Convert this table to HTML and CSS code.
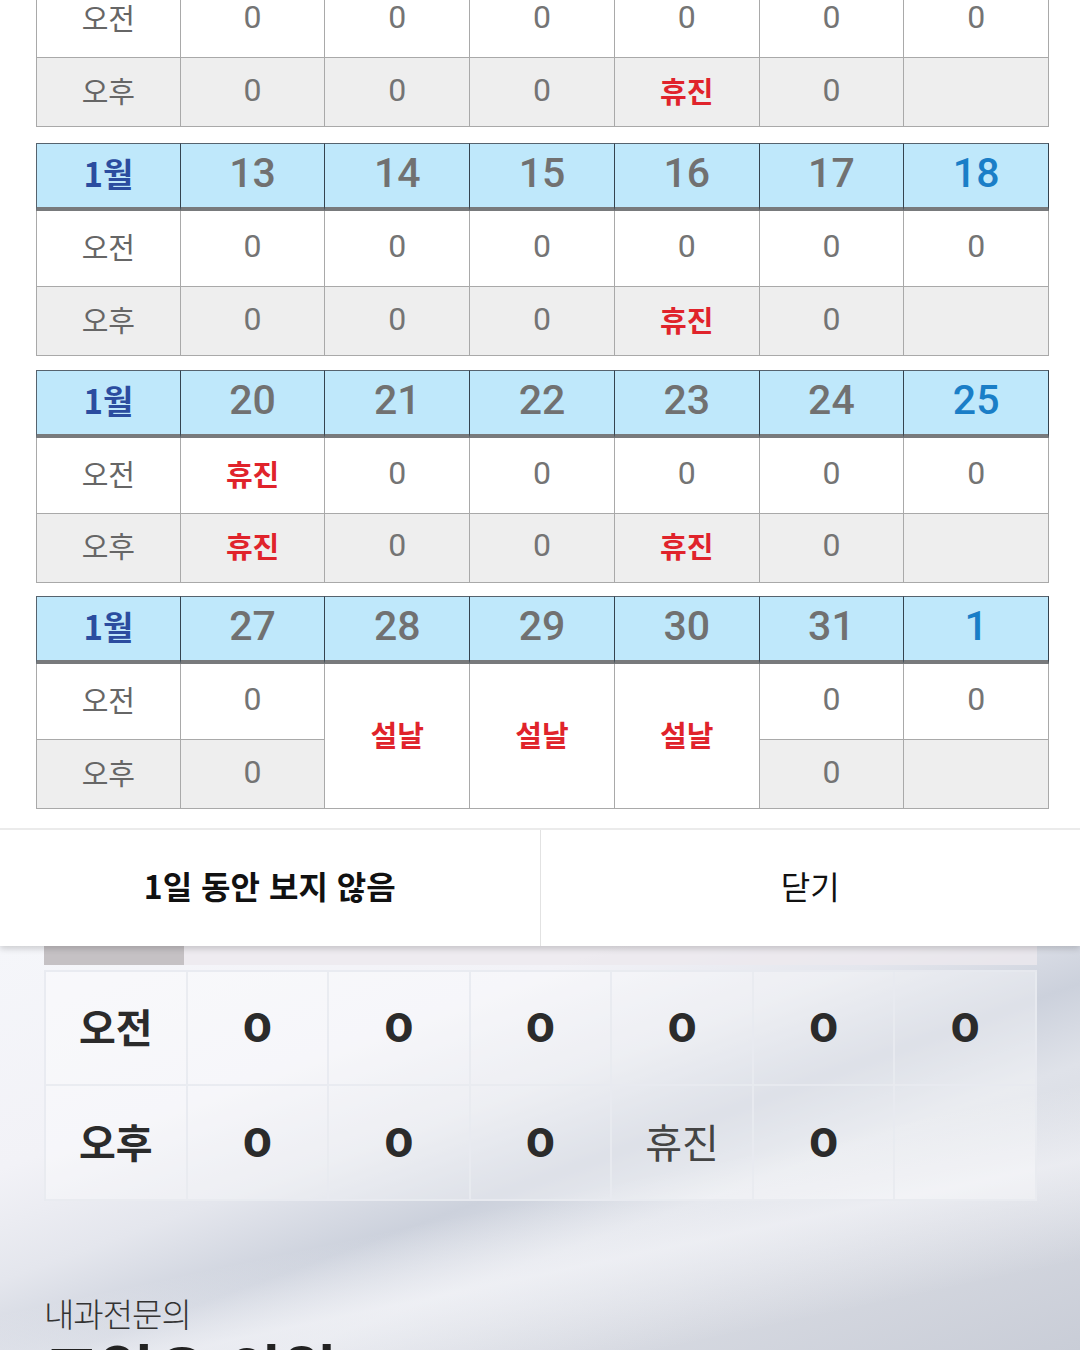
FILE: index.html
```html
<!DOCTYPE html>
<html lang="ko">
<head>
<meta charset="utf-8">
<title>진료시간 안내</title>
<link rel="stylesheet" href="styles.css">
</head>
<body>
<div class="popup">
  <div class="weeks">
    <div class="week week-first">
      <div class="hc hc-first month">1월</div>
      <div class="hc">6</div><div class="hc">7</div><div class="hc">8</div><div class="hc">9</div><div class="hc">10</div><div class="hc sat">11</div>
      <div class="c am lab">오전</div>
      <div class="c am">0</div><div class="c am">0</div><div class="c am">0</div><div class="c am">0</div><div class="c am">0</div><div class="c am">0</div>
      <div class="c pm lab">오후</div>
      <div class="c pm">0</div><div class="c pm">0</div><div class="c pm">0</div><div class="c pm off">휴진</div><div class="c pm">0</div><div class="c pm"></div>
    </div>
    <div class="week week-second">
      <div class="hc hc-first month">1월</div>
      <div class="hc">13</div><div class="hc">14</div><div class="hc">15</div><div class="hc">16</div><div class="hc">17</div><div class="hc sat">18</div>
      <div class="c am lab">오전</div>
      <div class="c am">0</div><div class="c am">0</div><div class="c am">0</div><div class="c am">0</div><div class="c am">0</div><div class="c am">0</div>
      <div class="c pm lab">오후</div>
      <div class="c pm">0</div><div class="c pm">0</div><div class="c pm">0</div><div class="c pm off">휴진</div><div class="c pm">0</div><div class="c pm"></div>
    </div>
    <div class="week">
      <div class="hc hc-first month">1월</div>
      <div class="hc">20</div><div class="hc">21</div><div class="hc">22</div><div class="hc">23</div><div class="hc">24</div><div class="hc sat">25</div>
      <div class="c am lab">오전</div>
      <div class="c am off">휴진</div><div class="c am">0</div><div class="c am">0</div><div class="c am">0</div><div class="c am">0</div><div class="c am">0</div>
      <div class="c pm lab">오후</div>
      <div class="c pm off">휴진</div><div class="c pm">0</div><div class="c pm">0</div><div class="c pm off">휴진</div><div class="c pm">0</div><div class="c pm"></div>
    </div>
    <div class="week">
      <div class="hc hc-first month">1월</div>
      <div class="hc">27</div><div class="hc">28</div><div class="hc">29</div><div class="hc">30</div><div class="hc">31</div><div class="hc sat">1</div>
      <div class="c am lab">오전</div>
      <div class="c am">0</div>
      <div class="c am off span2">설날</div><div class="c am off span2">설날</div><div class="c am off span2">설날</div>
      <div class="c am">0</div><div class="c am">0</div>
      <div class="c pm lab">오후</div>
      <div class="c pm">0</div>
      <div class="c pm">0</div><div class="c pm"></div>
    </div>
  </div>
  <div class="actions">
    <button class="act act-bold" type="button">1일 동안 보지 않음</button>
    <button class="act" type="button">닫기</button>
  </div>
</div>

<section class="page">
  <div class="sched">
    <div class="sched-top"><span class="sched-tab"></span></div>
    <div class="sched-grid">
      <div class="sc sc-lab">오전</div>
      <div class="sc mark">O</div><div class="sc mark">O</div><div class="sc mark">O</div><div class="sc mark">O</div><div class="sc mark">O</div><div class="sc mark">O</div>
      <div class="sc sc-lab">오후</div>
      <div class="sc mark">O</div><div class="sc mark">O</div><div class="sc mark">O</div><div class="sc sc-off">휴진</div><div class="sc mark">O</div><div class="sc"></div>
    </div>
  </div>
  <div class="intro">
    <p class="intro-sub">내과전문의</p>
    <h1 class="intro-title">고일오 의원</h1>
  </div>
</section>
</body>
</html>
```

FILE: styles.css
```css
* { box-sizing: border-box; }

html, body {
  margin: 0;
  padding: 0;
}

body {
  width: 1080px;
  height: 1350px;
  overflow: hidden;
  font-family: Roboto, "Noto Sans CJK KR", sans-serif;
  background: #e9ebf1;
}

/* ---------- popup ---------- */
.popup {
  position: relative;
  z-index: 2;
  background: #ffffff;
  box-shadow: 0 3px 6px rgba(0, 0, 0, 0.16);
}

.weeks {
  padding: 0 0 19px 36px;
}

.week {
  display: grid;
  width: 1013px;
  grid-template-columns: repeat(7, 1fr);
  grid-template-rows: 68px 76px 69px;
  margin-top: 13.5px;
}

.week-first { margin-top: -86px; }
.week-second { margin-top: 16px; }

.hc {
  display: flex;
  align-items: center;
  justify-content: center;
  background: #bfe8fb;
  border-top: 1px solid #56636e;
  border-right: 1px solid #34434f;
  border-bottom: 4px solid #787a7c;
  font-family: Roboto, "Noto Sans CJK KR", sans-serif;
  font-size: 41px;
  font-weight: 500;
  color: #717171;
  padding-bottom: 5px;
}

.hc-first { border-left: 1px solid #56636e; }

.hc.month {
  font-family: "Noto Sans CJK KR", sans-serif;
  font-size: 33px;
  font-weight: 700;
  color: #2b4c9f;
}

.hc.sat { color: #1a7ec7; }

.c {
  display: flex;
  align-items: center;
  justify-content: center;
  border-right: 1px solid #a9a9a9;
  border-bottom: 1px solid #a9a9a9;
  font-family: Roboto, "Noto Sans CJK KR", sans-serif;
  font-size: 32px;
  color: #747474;
  padding-bottom: 5px;
}

.c.am { background: #ffffff; }
.c.pm { background: #eeeeee; }

.c.lab {
  border-left: 1px solid #a9a9a9;
  font-family: "Noto Sans CJK KR", sans-serif;
  font-size: 29px;
  color: #666666;
}

.c.off {
  font-family: "Noto Sans CJK KR", sans-serif;
  font-size: 29px;
  font-weight: 700;
  color: #e0232b;
}

.c.span2 {
  grid-row: span 2;
  background: #ffffff;
}

.actions {
  display: flex;
  border-top: 2px solid #ebebeb;
}

.act {
  flex: 1 1 0;
  height: 116px;
  margin: 0;
  padding: 0 0 6px 0;
  border: 0;
  background: #ffffff;
  font-family: "Noto Sans CJK KR", sans-serif;
  font-size: 32px;
  font-weight: 400;
  color: #111111;
  letter-spacing: 0;
}

.act-bold {
  font-weight: 700;
  border-right: 1px solid #e2e2e2;
}

/* ---------- page behind ---------- */
.page {
  position: relative;
  z-index: 1;
  height: 404px;
  background:
    linear-gradient(168deg, rgba(255,255,255,0) 0%, rgba(255,255,255,0) 58%, rgba(250,250,253,0.55) 70%, rgba(255,255,255,0) 86%),
    linear-gradient(160deg, #f5f6fa 0%, #f2f2f7 28%, #e4e6ed 42%, #ccd1dc 54%, #dfe2e9 64%, #d6d9e1 78%, #c9cdd7 100%);
}

.sched {
  width: 993px;
  margin-left: 44px;
}

.sched-top {
  display: flex;
  height: 24px;
  padding-bottom: 5px;
}

.sched-tab {
  display: block;
  width: 140px;
  height: 19px;
  background: #c5c1c4;
}

.sched-top::after {
  content: "";
  flex: 1;
  height: 19px;
  background: rgba(236, 232, 238, 0.8);
}

.sched-grid {
  display: grid;
  grid-template-columns: repeat(7, 1fr);
  grid-template-rows: 114px 115px;
  border-left: 2px solid rgba(232, 234, 240, 0.9);
  border-top: 2px solid rgba(232, 234, 240, 0.9);
}

.sc {
  display: flex;
  align-items: center;
  justify-content: center;
  border-right: 2px solid rgba(232, 234, 240, 0.9);
  border-bottom: 2px solid rgba(232, 234, 240, 0.9);
  background: rgba(255, 255, 255, 0.35);
  font-family: "Noto Sans CJK KR", sans-serif;
  font-size: 40px;
  color: #2b2b2b;
  padding-bottom: 4px;
}

.sc-lab { font-weight: 700; }

.mark {
  font-family: Roboto, "Noto Sans CJK KR", sans-serif;
  font-weight: 900;
  font-size: 41px;
  padding-bottom: 0;
}

.sc-off {
  font-weight: 400;
  color: #444444;
}

.intro {
  padding: 92px 0 0 44px;
}

.intro-sub {
  margin: 0;
  font-family: "Noto Sans CJK KR", sans-serif;
  font-size: 33px;
  font-weight: 300;
  line-height: 40px;
  color: #333333;
  letter-spacing: -1px;
}

.intro-title {
  margin: 4px 0 0 0;
  font-family: "Noto Sans CJK KR", sans-serif;
  font-size: 60px;
  font-weight: 700;
  line-height: 64px;
  color: #222222;
}
```
